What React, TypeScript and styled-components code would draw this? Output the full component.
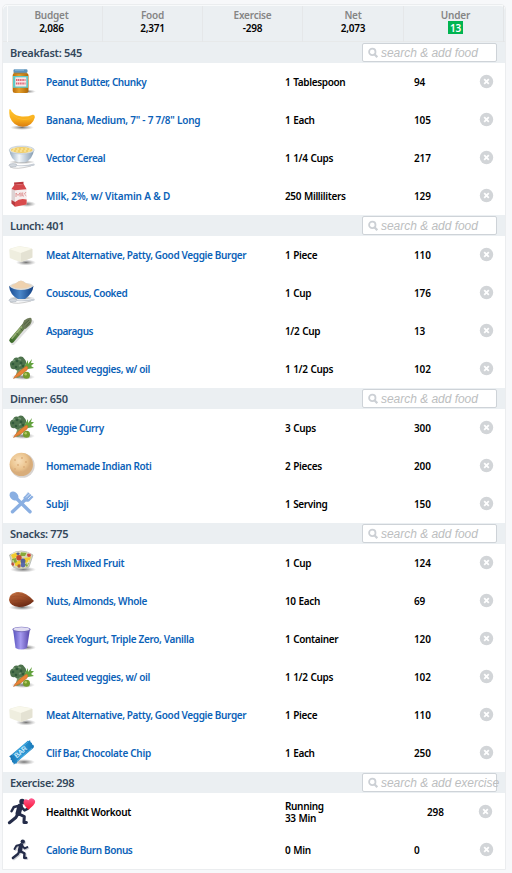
import React from 'react';
import styled, { createGlobalStyle } from 'styled-components';

const GlobalStyle = createGlobalStyle`
  * { box-sizing: border-box; }
  body { margin: 0; background: #f7f8fa; font-family: "Noto Sans", "Open Sans", sans-serif; }
`;

const Page = styled.div`
  width: 512px;
  height: 873px;
  padding: 4px 0 0 2px;
  overflow: hidden;
`;

const Panel = styled.main`
  width: 504px;
  height: 866px;
  border: 1px solid #ebedef;
  border-radius: 5px 5px 0 0;
  background: #fff;
`;

const Summary = styled.header`
  display: grid;
  grid-template-columns: 95px 100px 100px 101px 101px;
  height: 37px;
  padding-left: 4px;
  background: #ebeff2;
  border-top: 1px solid #f8fafb;
  border-radius: 5px 5px 0 0;
  box-shadow: inset 0 -1px #e7e9ea;
`;

const Stat = styled.div`
  display: flex;
  flex-direction: column;
  align-items: center;
  padding-top: 2px;
  border-left: 1px solid #e5e7e9;
  &:first-child { border-left-color: #f9fafb; padding-right: 7px; }
  &:last-child { border-right: 1px solid #e3e5e7; padding-left: 4px; }
`;

const StatLabel = styled.span`
  height: 13px;
  font-size: 10px;
  line-height: 14px;
  font-weight: 600;
  color: #858585;
  letter-spacing: -0.2px;
`;

const StatValue = styled.span<{ $badge?: boolean }>`
  height: 13px;
  padding: 0 2px;
  font-size: 10px;
  line-height: 14px;
  font-weight: 600;
  letter-spacing: -0.2px;
  color: ${p => (p.$badge ? '#fff' : '#000')};
  background: ${p => (p.$badge ? '#00b451' : 'transparent')};
`;

const SectionBar = styled.div`
  display: flex;
  align-items: center;
  justify-content: space-between;
  height: 21px;
  padding: 0 8px 0 7px;
  background: #ebeff2;
`;

const SectionTitle = styled.h2`
  margin: 0;
  font-size: 11px;
  line-height: 21px;
  font-weight: 600;
  color: #33475b;
  letter-spacing: -0.31px;
`;

const SearchBox = styled.label`
  display: flex;
  align-items: center;
  width: 135px;
  height: 19px;
  padding-left: 5px;
  border: 1px solid #ced3d8;
  border-radius: 2px;
  background: #fff;
  color: #bcbec0;
  font: italic 12px/17px "Liberation Sans", Arial, sans-serif;
  white-space: nowrap;
  svg { flex: none; margin-right: 3px; }
`;

const Placeholder = styled.span`
  padding-top: 1px;
  letter-spacing: -0.03px;
`;

const Row = styled.div`
  display: grid;
  grid-template-columns: 37px 239px 129px 63px 20px;
  align-items: center;
  height: 38px;
  padding-left: 6px;
  font-size: 10px;
  line-height: 12px;
  font-weight: 600;
  color: #000;
`;

const FoodName = styled.span<{ $plain?: boolean; $spacing: number }>`
  color: ${p => (p.$plain ? '#000' : '#0b62b8')};
  letter-spacing: ${p => p.$spacing - 0.2}px;
  white-space: nowrap;
`;

const Quantity = styled.span`
  letter-spacing: -0.35px;
  word-spacing: 0.6px;
  white-space: pre-line;
`;

const Calories = styled.span<{ $indent?: boolean }>`
  padding-left: ${p => (p.$indent ? 13 : 0)}px;
  letter-spacing: -0.15px;
`;

const RemoveButton = styled.button<{ $shift?: boolean }>`
  display: flex;
  width: 15px;
  height: 15px;
  margin: 0 0 2px ${p => (p.$shift ? 1 : 2)}px;
  padding: 0;
  border: 0;
  background: none;
`;

const IconSvg = styled.svg`
  display: block;
  width: 28px;
  height: 28px;
  margin-left: -1px;
  overflow: visible;
`;

const GradientSheet = styled.svg`
  display: block;
  width: 0;
  height: 0;
`;

const Shade = ({ x, y, rx, ry = 2 }: { x: number; y: number; rx: number; ry?: number }) => (
  <ellipse cx={x} cy={y} rx={rx} ry={ry} fill="url(#shade)" />
);

const Gradients = () => (
  <GradientSheet aria-hidden="true">
    <defs>
      <radialGradient id="shade"><stop stopColor="#444" stopOpacity=".75" /><stop offset="1" stopColor="#777" stopOpacity="0" /></radialGradient>
      <linearGradient id="jar"><stop stopColor="#b86a08" /><stop offset=".4" stopColor="#e5a02c" /><stop offset="1" stopColor="#ad6505" /></linearGradient>
      <linearGradient id="banana" x2="0" y2="1"><stop stopColor="#ffc52f" /><stop offset=".6" stopColor="#f8ad1b" /><stop offset="1" stopColor="#d97c10" /></linearGradient>
      <linearGradient id="bowl"><stop stopColor="#91a8bd" /><stop offset=".4" stopColor="#f4f8fb" /><stop offset="1" stopColor="#8199b0" /></linearGradient>
      <linearGradient id="blueBowl"><stop stopColor="#174a91" /><stop offset=".45" stopColor="#4b87c9" /><stop offset="1" stopColor="#123f82" /></linearGradient>
      <linearGradient id="spear" x1="0" y1="1" x2="1" y2="0"><stop stopColor="#3e6d2c" /><stop offset=".5" stopColor="#6f8f50" /><stop offset="1" stopColor="#5c6a4c" /></linearGradient>
      <radialGradient id="roti" cx=".4" cy=".35"><stop stopColor="#f8dfb9" /><stop offset=".7" stopColor="#ebc48f" /><stop offset="1" stopColor="#d8ad7b" /></radialGradient>
      <linearGradient id="nut" x2=".4" y2="1"><stop stopColor="#c77545" /><stop offset=".5" stopColor="#a2502a" /><stop offset="1" stopColor="#6c2a14" /></linearGradient>
      <linearGradient id="cup"><stop stopColor="#5550bd" /><stop offset=".45" stopColor="#a69bf0" /><stop offset="1" stopColor="#5342a6" /></linearGradient>
      <linearGradient id="bar" x2="1"><stop stopColor="#176fae" /><stop offset=".5" stopColor="#2c9ad8" /><stop offset="1" stopColor="#1978b8" /></linearGradient>
      <linearGradient id="heart" x2="0" y2="1"><stop stopColor="#ff5b91" /><stop offset="1" stopColor="#f9142f" /></linearGradient>
    </defs>
  </GradientSheet>
);

const Spoon = () => (
  <g>
    <path d="M2 23Q8 26 23 22" stroke="#aaa" fill="none" strokeWidth="1" opacity=".6" />
    <ellipse cx="5" cy="21.3" rx="4" ry="1.7" fill="#d3d8de" stroke="#9da6b2" strokeWidth=".5" />
    <path d="M8.5 21Q18 22 26 19.5Q28 21 25 22Q16 22.7 8 22" fill="#c8ced6" />
  </g>
);

const Runner = () => (
  <g fill="none" stroke="#242c49" strokeLinecap="round" strokeLinejoin="round">
    <circle cx="14" cy="4.3" r="2.6" fill="#242c49" stroke="none" />
    <path d="M12.2 8.6L10.4 15" strokeWidth="5" />
    <path d="M11.3 8.1L6.4 9.2L4.2 13.2M13 9L16.2 12.4L19.4 10.8" strokeWidth="2.3" />
    <path d="M10.2 15.5L8.2 19L2.2 23.8M10.8 15.5L16 18.2L15.7 23.5L18 23.6" strokeWidth="2.8" />
  </g>
);

type IconKind = 'jar' | 'banana' | 'cereal' | 'milk' | 'tofu' | 'couscous' | 'asparagus' | 'veg' | 'roti' | 'utensils' | 'fruit' | 'nut' | 'yogurt' | 'bar' | 'workout' | 'bonus';

const drawings: Record<IconKind, React.ReactNode> = {
  jar: <>
    <Shade x={19} y={23.5} rx={9} />
    <rect x="4.7" y="5" width="15.8" height="20" rx="2.5" fill="url(#jar)" />
    <path d="M5.7 4h13v2.3h-13z" fill="#b6802c" />
    <rect x="5.5" y="1.3" width="14" height="3.5" rx="1.2" fill="#5d92ba" />
    <path d="M7 2h9" stroke="#9ac2df" />
    <rect x="5" y="8" width="15" height="11.8" fill="#5fc9c7" />
    <rect x="7.3" y="9.3" width="11" height="9.2" fill="#fbe7e7" />
    <path d="M8 12h9.5M8 15.5h9.5" stroke="#df6475" strokeWidth="2" strokeDasharray="1.3 .5" />
  </>,
  banana: <>
    <Shade x={14} y={21.5} rx={12} ry={2.5} />
    <path d="M1.3 3.4Q3 3 3.6 5.6Q8 10.5 14 10.5Q20 10.8 24.6 8.7Q27 8.2 26.8 11.6Q24.5 20.4 15 20.7Q5.4 20.5 1.8 11Q1 7 1.3 3.4Z" fill="url(#banana)" />
    <path d="M4 8.5Q9 13.5 16 13.6Q22 13.3 25 11" stroke="#fcb92c" strokeWidth="1" fill="none" />
  </>,
  cereal: <>
    <Shade x={14} y={18} rx={13} />
    <path d="M1.3 6Q2.5 15.5 10 18.5H17Q24.5 15.5 26 6Z" fill="url(#bowl)" />
    <ellipse cx="13.7" cy="6" rx="12.6" ry="4" fill="#e2e6e8" stroke="#a8b8c6" strokeWidth=".5" />
    <ellipse cx="13.7" cy="6" rx="11" ry="3" fill="#f1cf6d" />
    <path d="M5 5h18M4 7h18" stroke="#fff0b4" strokeDasharray="2 2" /><Spoon />
  </>,
  milk: <>
    <Shade x={19} y={22} rx={9} ry={3} />
    <path d="M3.5 7L7 8V24.8L3.5 21.4Z" fill="#dcd1d2" />
    <path d="M7 8L18.6 7.2V22.4L7 24.8Z" fill="#f6eeee" />
    <path d="M6 .6L15.5-.2V2L6.3 3Z" fill="#b9373d" />
    <path d="M3.5 7L6.3 3L15.6 2L18.6 7.2L7 8.2Z" fill="#d4474b" />
    <path d="M7 20Q12 15.5 18.6 17.5V22.4L7 24.8Z" fill="#d94b4c" />
    <path d="M3.5 18L7 20V24.8L3.5 21.4Z" fill="#b93b40" />
    <path d="M8 15V11L10 13.5L12 10.8V14.6M13.2 10.7V14.4M14.7 10.4V14H16M18 10L16.4 12L18.3 13.9" stroke="#dc8585" strokeWidth=".8" fill="none" />
  </>,
  tofu: <>
    <Shade x={18} y={21.5} rx={10} ry={3} />
    <path d="M1.3 9Q1.3 8 2.5 7.6L9.5 5.4Q11 5 12.5 5.3L22.5 7Q24.5 7.4 24.4 8.5V16.5Q18 19.5 13 21Q7 19.5 1.8 17Z" fill="#efeedf" />
    <path d="M1.8 8.3L10.3 5.5L24 7.5L13 12Z" fill="#f9f8ec" /><path d="M13 12L24.3 8V16.5L13 21Z" fill="#e4e2d3" />
  </>,
  couscous: <>
    <Shade x={14} y={19} rx={13} />
    <path d="M1 7Q2 16 10 20H17Q24.5 15 25.5 7Z" fill="url(#blueBowl)" />
    <path d="M1 7Q5 4 8 4Q13-1 18 4Q23 4 25.7 7Q21 11 13 11Q5 11 1 7Z" fill="#dfdcd6" />
    <path d="M3 7Q7 4.5 9 3.5Q13 0 17 3.7Q21 5 23.5 7Q18 9.7 13 9.5Q7 9.5 3 7Z" fill="#efd2af" /><Spoon />
  </>,
  asparagus: <>
    <path d="M5 26L24 5" stroke="#8a8a8a" strokeWidth="4" opacity=".25" strokeLinecap="round" />
    <path d="M3.8 23.4L18 6.5" stroke="url(#spear)" strokeWidth="5" strokeLinecap="round" />
    <path d="M3.6 21.7L14 9.5" stroke="#9ab178" strokeWidth="1.5" />
    <path d="M14 9L16 3.5Q20 .3 23.2 1Q24.7 4 22 8L17.5 12Z" fill="#6d7a59" />
    <path d="M16 7.5L21 3M18 9.5L22 5M8.5 16l2 2.3M12.5 11.5l2.3 2.5" stroke="#475a3a" strokeWidth=".8" />
  </>,
  veg: <>
    <Shade x={15} y={22} rx={12} ry={3} />
    <path d="M10 12L7.5 22Q9 24 12 22L16 13Z" fill="#7a9b67" />
    <path d="M2.3 11Q1 6.5 5 5.5Q6 1.5 10 2.7Q14 0 16.5 4Q19 6 17.5 10Q18 14 12 14Q9 17 7 14Q3 15 2.3 11Z" fill="#4e734d" />
    <g fill="#315a3b"><circle cx="5" cy="9" r="1.3" /><circle cx="9" cy="6" r="1.3" /><circle cx="13" cy="8" r="1.4" /><circle cx="8" cy="12" r="1.3" /><circle cx="15" cy="11" r="1.2" /></g>
    <path d="M5 6l2-1M10 4l3 1M11 11l2-1" stroke="#769875" strokeWidth="1.5" />
    <path d="M16 12L20 5L20 9L24 4L23 8L26 8L23 11L26 13L20 14Z" fill="#63a23f" />
    <path d="M18.5 11Q21 12 19 15Q13 21 5.5 23.5Q8 18 18.5 11Z" fill="#e98335" stroke="#bd622d" strokeWidth=".5" />
    <circle cx="18.5" cy="20.2" r="3.5" fill="#729b2c" /><circle cx="17.7" cy="19.3" r="1.2" fill="#b8c965" />
  </>,
  roti: <>
    <circle cx="14.4" cy="13.5" r="12.3" fill="#8d8178" opacity=".35" />
    <circle cx="13.3" cy="12.4" r="11.7" fill="url(#roti)" />
    <g fill="#dcae7b"><circle cx="7" cy="8" r=".9" /><circle cx="14" cy="6" r="1" /><circle cx="18" cy="10" r="1.1" /><circle cx="10" cy="13" r=".9" /><circle cx="16" cy="15" r="1" /><circle cx="7" cy="17" r="1" /><circle cx="13" cy="20" r="1" /><circle cx="20" cy="17" r=".7" /></g>
  </>,
  utensils: <g fill="#8aafe2" stroke="#8aafe2">
    <ellipse cx="6" cy="6" rx="3.8" ry="5" transform="rotate(-45 6 6)" stroke="none" />
    <path d="M8 8L22 21.8M18 9L4.5 21.8" strokeWidth="3.4" strokeLinecap="round" />
    <path d="M15.5 7.5L20 2L25.5 7L21 11.5Q16 13 15.5 7.5Z" stroke="none" />
    <path d="M18 7.5L22.5 3M20 9L24 5M16.5 6L20.5 2" stroke="#fff" strokeWidth=".65" />
  </g>,
  fruit: <>
    <Shade x={15} y={20.5} rx={13} ry={3} />
    <path d="M1.5 6L5 18Q13 22 21 18L25 6Q13-2 1.5 6Z" fill="#d8d6b4" stroke="#a9afb0" strokeWidth=".7" />
    <path d="M3 6L8 3L10 7L5 10ZM16 9L23 8L21 13L17 14ZM7 13L13 11L12 17L7 17Z" fill="#f1cb2d" />
    <path d="M13 3L19 3L17 7L12 7ZM4 10L8 9L9 13L5 15ZM16 15L21 14L19 18Z" fill="#87a937" />
    <circle cx="11" cy="8.8" r="2.7" fill="#c34932" /><circle cx="21" cy="6" r="2" fill="#cb4a3e" /><circle cx="5" cy="15" r="1.7" fill="#bb513c" />
    <circle cx="15" cy="12" r="2.5" fill="#526096" /><circle cx="10" cy="4.5" r="1.6" fill="#58628c" /><circle cx="15" cy="16" r="2.4" fill="#5969ad" /><circle cx="11" cy="17" r="1.7" fill="#a75e42" />
    <path d="M3 5Q13 1 23 5M5 11L7 17M21 11L19 16" stroke="#fff" opacity=".55" fill="none" />
  </>,
  nut: <>
    <Shade x={14} y={20.5} rx={13} ry={2.7} />
    <path d="M1 13Q1 7 8 5.2Q17 3.8 26 14Q20 20 11 20Q2 19 1 13Z" fill="url(#nut)" />
    <path d="M3 10Q12 7 22 13M2 14Q12 12 23 15M4 17Q13 15 20 17M8 6Q16 7 23 12" stroke="#793719" strokeWidth=".4" opacity=".6" fill="none" />
  </>,
  yogurt: <>
    <Shade x={19} y={22.5} rx={9} ry={2.7} />
    <path d="M5 4L7.5 23Q13 26 19 23L22 4Z" fill="url(#cup)" />
    <ellipse cx="13.5" cy="4.5" rx="9.2" ry="2.8" fill="#746bbc" /><ellipse cx="13.5" cy="4.2" rx="8.1" ry="2" fill="#e1ddf2" />
  </>,
  bar: <>
    <Shade x={16} y={23} rx={11} ry={3} />
    <path d="M1.2 17.3L2.8 16.2L19.8 1.8L21 2L22 1L22.5 3L24 4.3L24 5.5L25.5 6L26 8L24.8 9.5L9.3 22.8L8.3 24.8L7 24.5L5.8 25.8L5.5 24L4 23L4 21.5L2.6 20.7L2.8 19Z" fill="url(#bar)" />
    <path d="M4 16.3L20.5 2.7M9 22L24 9" stroke="#58b9e7" strokeWidth=".7" />
    <text x="8.7" y="19.6" transform="rotate(-41 8.7 19.6)" fill="#c9e9fa" fontFamily="Liberation Sans" fontSize="7" fontWeight="700" letterSpacing="-.3">BAR</text>
  </>,
  workout: <>
    <g transform="translate(-1 -1) scale(1.08)"><Runner /></g>
    <path d="M20.5 11.8Q15 7 15.5 3.8Q16-.4 20.5 2.2Q22.5-.8 25.5 1Q29 3.3 25.2 7.5Z" fill="url(#heart)" />
  </>,
  bonus: <>
    <g transform="translate(4 3) scale(.84)" opacity=".22"><Runner /></g>
    <g transform="translate(3 2) scale(.84)"><Runner /></g>
  </>,
};

const FoodIcon = ({ kind }: { kind: IconKind }) => <IconSvg viewBox="0 0 28 28">{drawings[kind]}</IconSvg>;

const SearchIcon = () => (
  <svg width="10" height="11" viewBox="0 0 10 11" fill="none" stroke="#ccd0d5" strokeWidth="1.8">
    <circle cx="4.3" cy="4.9" r="3.2" /><path d="M6.5 7.2L9.3 10.2" strokeWidth="2.2" />
  </svg>
);

const CloseIcon = () => (
  <svg width="15" height="15" viewBox="0 0 15 15">
    <circle cx="7.5" cy="7.5" r="6.7" fill="#d2d5d8" />
    <path d="M5.2 5.2L9.8 9.8M9.8 5.2L5.2 9.8" stroke="#fff" strokeWidth="1.8" />
  </svg>
);

interface Entry { icon: IconKind; name: string; amount: string; cals: string; spacing: number; plain?: boolean; }
interface Meal { title: string; search?: string; entries: Entry[]; }

const veggies: Entry = { icon: 'veg', name: 'Sauteed veggies, w/ oil', amount: '1 1/2 Cups', cals: '102', spacing: -0.14 };
const patty: Entry = { icon: 'tofu', name: 'Meat Alternative, Patty, Good Veggie Burger', amount: '1 Piece', cals: '110', spacing: -0.16 };

const meals: Meal[] = [
  { title: 'Breakfast: 545', entries: [
    { icon: 'jar', name: 'Peanut Butter, Chunky', amount: '1 Tablespoon', cals: '94', spacing: -0.23 },
    { icon: 'banana', name: 'Banana, Medium, 7" - 7 7/8" Long', amount: '1 Each', cals: '105', spacing: -0.03 },
    { icon: 'cereal', name: 'Vector Cereal', amount: '1 1/4 Cups', cals: '217', spacing: -0.26 },
    { icon: 'milk', name: 'Milk, 2%, w/ Vitamin A & D', amount: '250 Milliliters', cals: '129', spacing: 0.05 },
  ] },
  { title: 'Lunch: 401', entries: [
    patty,
    { icon: 'couscous', name: 'Couscous, Cooked', amount: '1 Cup', cals: '176', spacing: -0.25 },
    { icon: 'asparagus', name: 'Asparagus', amount: '1/2 Cup', cals: '13', spacing: -0.28 },
    veggies,
  ] },
  { title: 'Dinner: 650', entries: [
    { icon: 'veg', name: 'Veggie Curry', amount: '3 Cups', cals: '300', spacing: -0.2 },
    { icon: 'roti', name: 'Homemade Indian Roti', amount: '2 Pieces', cals: '200', spacing: -0.17 },
    { icon: 'utensils', name: 'Subji', amount: '1 Serving', cals: '150', spacing: -0.05 },
  ] },
  { title: 'Snacks: 775', entries: [
    { icon: 'fruit', name: 'Fresh Mixed Fruit', amount: '1 Cup', cals: '124', spacing: -0.17 },
    { icon: 'nut', name: 'Nuts, Almonds, Whole', amount: '10 Each', cals: '69', spacing: -0.13 },
    { icon: 'yogurt', name: 'Greek Yogurt, Triple Zero, Vanilla', amount: '1 Container', cals: '120', spacing: -0.14 },
    veggies,
    patty,
    { icon: 'bar', name: 'Clif Bar, Chocolate Chip', amount: '1 Each', cals: '250', spacing: -0.1 },
  ] },
  { title: 'Exercise: 298', search: 'search & add exercise', entries: [
    { icon: 'workout', name: 'HealthKit Workout', amount: 'Running\n33 Min', cals: '298', spacing: -0.15, plain: true },
    { icon: 'bonus', name: 'Calorie Burn Bonus', amount: '0 Min', cals: '0', spacing: -0.2 },
  ] },
];

const stats = [['Budget', '2,086'], ['Food', '2,371'], ['Exercise', '-298'], ['Net', '2,073'], ['Under', '13']];

export default function App() {
  return (
    <Page>
      <GlobalStyle />
      <Gradients />
      <Panel>
        <Summary>
          {stats.map(([label, value]) => (
            <Stat key={label}>
              <StatLabel>{label}</StatLabel>
              <StatValue $badge={label === 'Under'}>{value}</StatValue>
            </Stat>
          ))}
        </Summary>
        {meals.map(meal => (
          <section key={meal.title}>
            <SectionBar>
              <SectionTitle>{meal.title}</SectionTitle>
              <SearchBox>
                <SearchIcon />
                <Placeholder>{meal.search ?? 'search & add food'}</Placeholder>
              </SearchBox>
            </SectionBar>
            {meal.entries.map(entry => (
              <Row key={entry.name}>
                <FoodIcon kind={entry.icon} />
                <FoodName $plain={entry.plain} $spacing={entry.spacing}>{entry.name}</FoodName>
                <Quantity>{entry.amount}</Quantity>
                <Calories $indent={entry.plain}>{entry.cals}</Calories>
                <RemoveButton $shift={entry.plain} aria-label="Remove"><CloseIcon /></RemoveButton>
              </Row>
            ))}
          </section>
        ))}
      </Panel>
    </Page>
  );
}
